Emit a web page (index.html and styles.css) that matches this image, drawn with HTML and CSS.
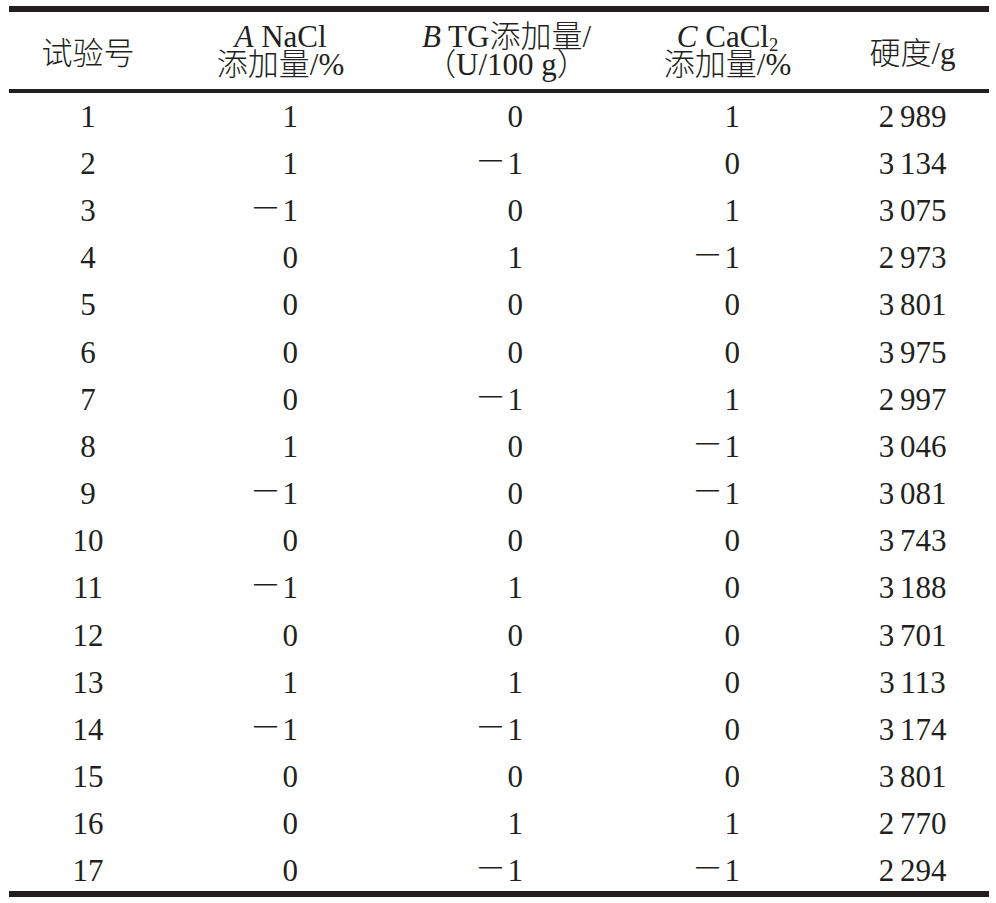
FILE: index.html
```html
<!DOCTYPE html>
<html lang="zh">
<head>
<meta charset="utf-8">
<link rel="stylesheet" href="styles.css">
</head>
<body>
<div class="table">
  <div class="row head">
    <div class="c c1">试验号</div>
    <div class="c"><div class="ln"><i>A</i> NaCl</div><div class="ln">添加量/%</div></div>
    <div class="c"><div class="ln"><i>B</i> TG添加量/</div><div class="ln">（U/100 g）</div></div>
    <div class="c"><div class="ln"><i>C</i> CaCl<sub>2</sub></div><div class="ln">添加量/%</div></div>
    <div class="c">硬度/g</div>
  </div>
  <div class="row"><div class="c c1">1</div><div class="c n">1</div><div class="c n">0</div><div class="c n">1</div><div class="c h">2 989</div></div>
  <div class="row"><div class="c c1">2</div><div class="c n">1</div><div class="c n"><span class="minus">−</span>1</div><div class="c n">0</div><div class="c h">3 134</div></div>
  <div class="row"><div class="c c1">3</div><div class="c n"><span class="minus">−</span>1</div><div class="c n">0</div><div class="c n">1</div><div class="c h">3 075</div></div>
  <div class="row"><div class="c c1">4</div><div class="c n">0</div><div class="c n">1</div><div class="c n"><span class="minus">−</span>1</div><div class="c h">2 973</div></div>
  <div class="row"><div class="c c1">5</div><div class="c n">0</div><div class="c n">0</div><div class="c n">0</div><div class="c h">3 801</div></div>
  <div class="row"><div class="c c1">6</div><div class="c n">0</div><div class="c n">0</div><div class="c n">0</div><div class="c h">3 975</div></div>
  <div class="row"><div class="c c1">7</div><div class="c n">0</div><div class="c n"><span class="minus">−</span>1</div><div class="c n">1</div><div class="c h">2 997</div></div>
  <div class="row"><div class="c c1">8</div><div class="c n">1</div><div class="c n">0</div><div class="c n"><span class="minus">−</span>1</div><div class="c h">3 046</div></div>
  <div class="row"><div class="c c1">9</div><div class="c n"><span class="minus">−</span>1</div><div class="c n">0</div><div class="c n"><span class="minus">−</span>1</div><div class="c h">3 081</div></div>
  <div class="row"><div class="c c1">10</div><div class="c n">0</div><div class="c n">0</div><div class="c n">0</div><div class="c h">3 743</div></div>
  <div class="row"><div class="c c1">11</div><div class="c n"><span class="minus">−</span>1</div><div class="c n">1</div><div class="c n">0</div><div class="c h">3 188</div></div>
  <div class="row"><div class="c c1">12</div><div class="c n">0</div><div class="c n">0</div><div class="c n">0</div><div class="c h">3 701</div></div>
  <div class="row"><div class="c c1">13</div><div class="c n">1</div><div class="c n">1</div><div class="c n">0</div><div class="c h">3 113</div></div>
  <div class="row"><div class="c c1">14</div><div class="c n"><span class="minus">−</span>1</div><div class="c n"><span class="minus">−</span>1</div><div class="c n">0</div><div class="c h">3 174</div></div>
  <div class="row"><div class="c c1">15</div><div class="c n">0</div><div class="c n">0</div><div class="c n">0</div><div class="c h">3 801</div></div>
  <div class="row"><div class="c c1">16</div><div class="c n">0</div><div class="c n">1</div><div class="c n">1</div><div class="c h">2 770</div></div>
  <div class="row last"><div class="c c1">17</div><div class="c n">0</div><div class="c n"><span class="minus">−</span>1</div><div class="c n"><span class="minus">−</span>1</div><div class="c h">2 294</div></div>
</div>
</body>
</html>
```

FILE: styles.css
```css
html, body {
  margin: 0;
  padding: 0;
  background: #ffffff;
}

body {
  font-family: "Liberation Serif", "Noto Sans CJK SC", serif;
  font-size: 31px;
  color: #231f20;
}

.table {
  width: 980px;
  margin: 6px 0 0 9px;
  border-top: 6px solid #231f20;
  border-bottom: 6px solid #231f20;
}

.row {
  display: grid;
  grid-template-columns: 158px 227px 225px 217px 153px;
  height: 47.2px;
  align-items: center;
}

.head {
  height: 77px;
  border-bottom: 4px solid #231f20;
  font-weight: 300;
}

.head .c {
  text-align: center;
}

.ln {
  height: 28px;
  line-height: 28px;
}

.c {
  white-space: nowrap;
}

.c1 {
  text-align: center;
}

.n {
  text-align: right;
  padding-right: 96px;
}

.h {
  text-align: center;
  word-spacing: -2px;
}

.last {
  height: 43px;
  align-items: start;
  padding-top: 5px;
  box-sizing: border-box;
}

.minus {
  display: inline-block;
  transform: translateY(-3px) scaleX(1.6);
  transform-origin: right center;
  margin-right: 3px;
}

sub {
  font-size: 0.6em;
  vertical-align: -0.2em;
  line-height: 0;
}

i {
  font-style: italic;
}
```
